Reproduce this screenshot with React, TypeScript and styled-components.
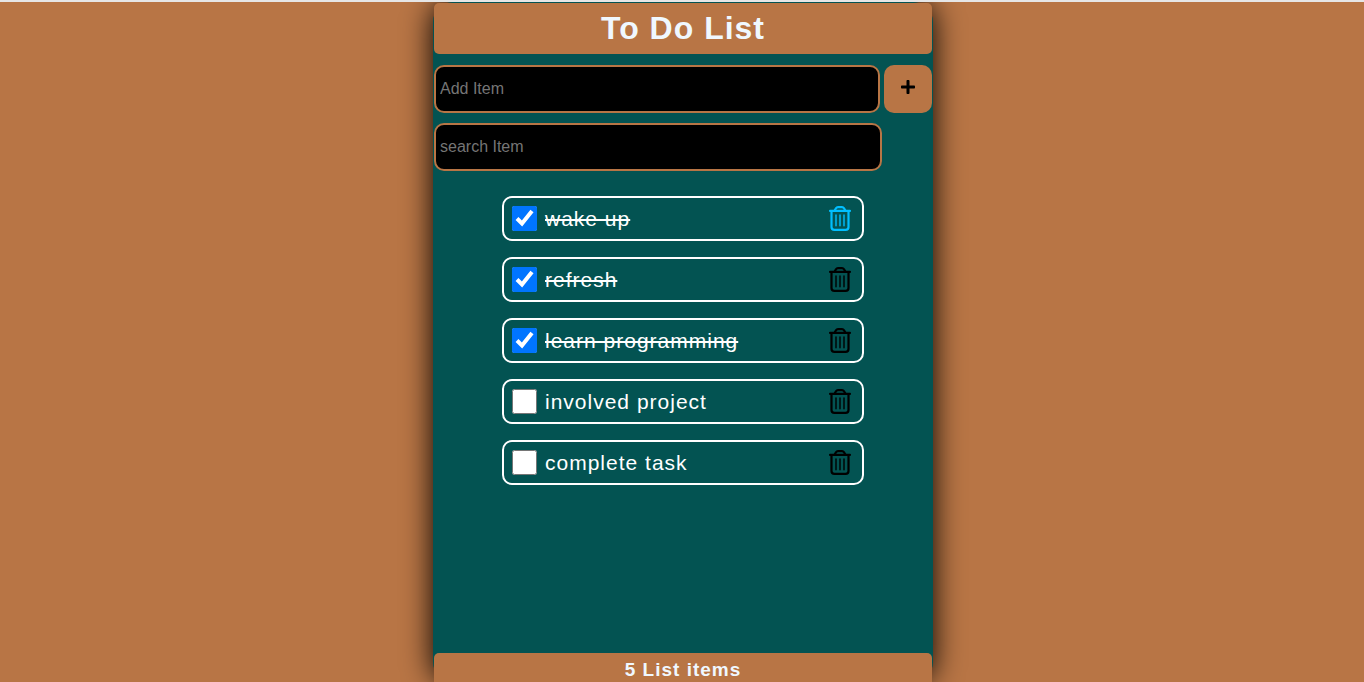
import React, { useState } from "react";
import styled, { createGlobalStyle } from "styled-components";
import { FaPlus } from "react-icons/fa";

const GlobalStyle = createGlobalStyle`
  * { box-sizing: border-box; }
  body {
    margin: 0;
    background: #b87545;
    font-family: Arial, "Liberation Sans", sans-serif;
  }
`;

const Page = styled.div`
  height: 100vh;
  min-height: 400px;
  display: flex;
  justify-content: center;
  padding-left: 2px;
  border-top: 2px solid #e6e6e6;
  overflow: hidden;
`;

const Card = styled.div`
  width: 100%;
  max-width: 500px;
  display: flex;
  flex-direction: column;
  padding: 1px 1px 0;
  border-radius: 20px;
  background: #035352;
  box-shadow: 0 0 30px #000;
`;

const Header = styled.header`
  flex: none;
  padding: 7px 0 8px;
  border-radius: 5px;
  background: #b87545;
  text-align: center;
`;

const Title = styled.h1`
  margin: 0;
  color: aliceblue;
  font-size: 32px;
  line-height: 36px;
  letter-spacing: 1px;
`;

const AddForm = styled.form`
  flex: none;
  display: flex;
  gap: 4px;
  margin-top: 11px;
`;

const SearchForm = styled.form`
  flex: none;
  display: flex;
  margin: 10px 50px 0 0;
`;

const TextInput = styled.input`
  flex: 1;
  min-width: 0;
  height: 48px;
  padding: 1px 4px;
  border: 2px solid #b87545;
  border-radius: 10px;
  background: #000;
  color: #fff;
  font-family: inherit;
  font-size: 16px;
  &::placeholder { color: #757575; }
`;

const AddButton = styled.button`
  width: 48px;
  height: 48px;
  display: flex;
  align-items: center;
  justify-content: center;
  padding: 0 0 4px;
  border: 0;
  border-radius: 10px;
  background: #b87545;
  color: #000;
  font-size: 16px;
`;

const List = styled.ul`
  flex: 1;
  display: flex;
  flex-direction: column;
  gap: 16px;
  margin: 25px 68px 0;
  padding: 0;
  list-style: none;
`;

const Item = styled.li`
  height: 45px;
  display: flex;
  align-items: center;
  padding: 0 8px;
  border: 2px solid #fff;
  border-radius: 10px;
`;

const Check = styled.input`
  flex: none;
  width: 25px;
  height: 25px;
  margin: 0 8px 0 0;
`;

const Label = styled.label<{ $done: boolean }>`
  flex: 1;
  color: #fff;
  font-size: 21px;
  letter-spacing: 1px;
  text-decoration: ${(p) => (p.$done ? "line-through" : "none")};
`;

const DeleteButton = styled.button<{ $active: boolean }>`
  display: flex;
  padding: 0 3px 0 0;
  border: 0;
  background: none;
  color: ${(p) => (p.$active ? "deepskyblue" : "#000")};
`;

const Footer = styled.footer`
  flex: none;
  height: 34px;
  margin-bottom: -5px;
  border-radius: 5px;
  background: #b87545;
  color: aliceblue;
  font-size: 19px;
  font-weight: bold;
  line-height: 34px;
  letter-spacing: 1px;
  text-align: center;
`;

const TrashIcon = () => (
  <svg width="22" height="25" viewBox="0 0 22 25" fill="none" stroke="currentColor" strokeLinecap="round" aria-hidden="true">
    <path d="M1 4.9H21" strokeWidth="2.1" />
    <path d="M5.6 4.6L6.9 2.4Q7.7 1.1 9 1.1H13Q14.3 1.1 15.1 2.4L16.4 4.6" strokeWidth="2.1" />
    <path d="M2.5 5V21Q2.5 23.9 5.4 23.9H16.6Q19.5 23.9 19.5 21V5" strokeWidth="2.2" />
    <path d="M7 9V19.8M11 9V19.8M15 9V19.8" strokeWidth="1.4" />
  </svg>
);

const initialItems = [
  { id: 1, text: "wake up", done: true },
  { id: 2, text: "refresh", done: true },
  { id: 3, text: "learn programming", done: true },
  { id: 4, text: "involved project", done: false },
  { id: 5, text: "complete task", done: false },
];

export default function App() {
  const [items, setItems] = useState(initialItems);
  const [draft, setDraft] = useState("");
  const [search, setSearch] = useState("");

  const add = (e: React.FormEvent) => {
    e.preventDefault();
    if (!draft.trim()) return;
    setItems([...items, { id: Date.now(), text: draft.trim(), done: false }]);
    setDraft("");
  };
  const toggle = (id: number) =>
    setItems(items.map((i) => (i.id === id ? { ...i, done: !i.done } : i)));
  const remove = (id: number) => setItems(items.filter((i) => i.id !== id));

  return (
    <Page>
      <GlobalStyle />
      <Card>
        <Header>
          <Title>To Do List</Title>
        </Header>
        <AddForm onSubmit={add}>
          <TextInput
            aria-label="Add Item"
            placeholder="Add Item"
            value={draft}
            onChange={(e) => setDraft(e.target.value)}
          />
          <AddButton type="submit" aria-label="Add">
            <FaPlus />
          </AddButton>
        </AddForm>
        <SearchForm onSubmit={(e) => e.preventDefault()}>
          <TextInput
            aria-label="Search items"
            placeholder="search Item"
            value={search}
            onChange={(e) => setSearch(e.target.value)}
          />
        </SearchForm>
        <List>
          {items
            .filter((i) => i.text.toLowerCase().includes(search.toLowerCase()))
            .map((i) => (
              <Item key={i.id}>
                <Check
                  type="checkbox"
                  id={`item-${i.id}`}
                  checked={i.done}
                  onChange={() => toggle(i.id)}
                />
                <Label htmlFor={`item-${i.id}`} $done={i.done}>
                  {i.text}
                </Label>
                <DeleteButton
                  type="button"
                  aria-label={`Delete ${i.text}`}
                  $active={i.id === 1}
                  onClick={() => remove(i.id)}
                >
                  <TrashIcon />
                </DeleteButton>
              </Item>
            ))}
        </List>
        <Footer>{items.length} List items</Footer>
      </Card>
    </Page>
  );
}
